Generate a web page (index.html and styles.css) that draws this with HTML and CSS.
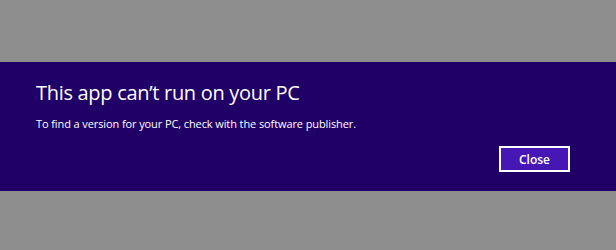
FILE: index.html
```html
<!DOCTYPE html>
<html lang="en">
<head>
    <meta charset="UTF-8">
    <title>This app can't run on your PC</title>
    <link rel="stylesheet" href="styles.css">
</head>
<body>
    <div class="banner">
        <div class="message">
            <h1>This app can’t run on your PC</h1>
            <p>To find a version for your PC, check with the software publisher.</p>
        </div>
        <div class="actions">
            <button type="button">Close</button>
        </div>
    </div>
</body>
</html>
```

FILE: styles.css
```css
html, body {
  margin: 0;
  height: 250px;
  overflow: hidden;
}

body {
  background-color: #8e8e8e;
  font-family: "Open Sans", "Noto Sans", sans-serif;
  color: #ffffff;
}

.banner {
  margin-top: 62px;
  height: 129px;
  box-sizing: border-box;
  background-color: #200067;
  padding: 17px 46px 0 36px;
  display: flex;
  flex-direction: column;
}

h1 {
  margin: 0;
  font-size: 20px;
  font-weight: 400;
  line-height: 28px;
  letter-spacing: -0.3px;
}

p {
  margin: 9px 0 0 0;
  font-size: 11px;
  line-height: 16px;
  letter-spacing: -0.1px;
}

.actions {
  display: flex;
  justify-content: flex-end;
  margin-top: 14px;
}

button {
  width: 71px;
  height: 26px;
  border: 2px solid #ffffff;
  background-color: #4617b4;
  color: #ffffff;
  font-family: "Open Sans", "Noto Sans", sans-serif;
  font-size: 12px;
  font-weight: 600;
  padding: 0;
  cursor: pointer;
}
```
